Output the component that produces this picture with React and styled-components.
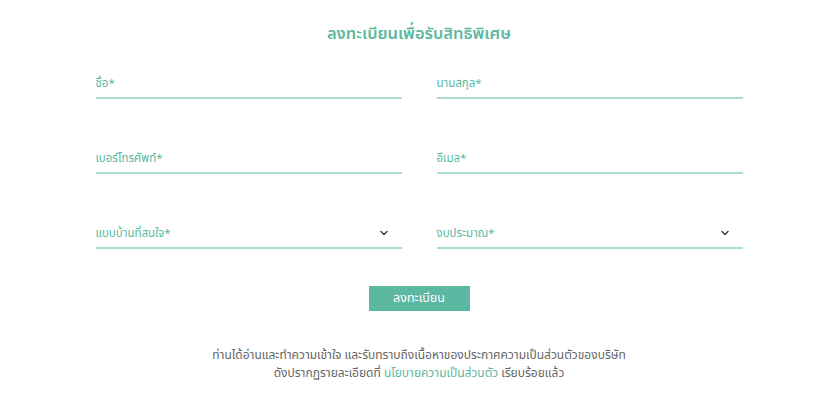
import React from "react";
import styled, { createGlobalStyle } from "styled-components";

const GlobalStyle = createGlobalStyle`
    body {
        margin: 0;
        background: #fff;
        font-family: "Noto Sans", "Noto Sans Thai", sans-serif;
    }
`;

const Page = styled.div`
    width: 825px;
    height: 408px;
    display: flex;
    flex-direction: column;
    align-items: center;
    padding: 20px 0 0 13px;
    box-sizing: border-box;
`;

const Title = styled.h2`
    margin: 0;
    font-size: 16.5px;
    font-weight: 600;
    color: #5bb89f;
    line-height: 26px;
`;

const Form = styled.div`
    width: 647px;
    margin-top: 27px;
    display: grid;
    grid-template-columns: 306px 306px;
    column-gap: 35px;
    row-gap: 49px;
`;

const Field = styled.div`
    height: 20px;
    display: flex;
    align-items: center;
    justify-content: space-between;
    border-bottom: 2px solid #a9ddcd;
    padding: 0 12px 4px 0;
`;

const Label = styled.span`
    font-size: 11.5px;
    color: #5bb89f;
`;

const Chevron = () => (
    <svg width="12" height="12" viewBox="0 0 24 24" fill="none" stroke="#444" strokeWidth="3" strokeLinecap="round" strokeLinejoin="round">
        <polyline points="6 9 12 15 18 9" />
    </svg>
);

const Button = styled.button`
    margin-top: 37px;
    width: 101px;
    height: 25px;
    border: none;
    background: #5cb8a0;
    color: #fff;
    font-family: inherit;
    font-size: 12.5px;
    cursor: pointer;
`;

const Note = styled.p`
    margin: 35px 0 0;
    text-align: center;
    font-size: 12px;
    line-height: 18px;
    color: #666;
`;

const Link = styled.a`
    color: #5bb89f;
    text-decoration: none;
`;

const fields = [
    { label: "ชื่อ*" },
    { label: "นามสกุล*" },
    { label: "เบอร์โทรศัพท์*" },
    { label: "อีเมล*" },
    { label: "แบบบ้านที่สนใจ*", select: true },
    { label: "งบประมาณ*", select: true },
];

export default function App() {
    return (
        <Page>
            <GlobalStyle />
            <Title>ลงทะเบียนเพื่อรับสิทธิพิเศษ</Title>
            <Form>
                {fields.map((f) => (
                    <Field key={f.label}>
                        <Label>{f.label}</Label>
                        {f.select && <Chevron />}
                    </Field>
                ))}
            </Form>
            <Button>ลงทะเบียน</Button>
            <Note>
                ท่านได้อ่านและทำความเข้าใจ และรับทราบถึงเนื้อหาของประกาศความเป็นส่วนตัวของบริษัท
                <br />
                ดังปรากฏรายละเอียดที่ <Link href="#">นโยบายความเป็นส่วนตัว</Link> เรียบร้อยแล้ว
            </Note>
        </Page>
    );
}
